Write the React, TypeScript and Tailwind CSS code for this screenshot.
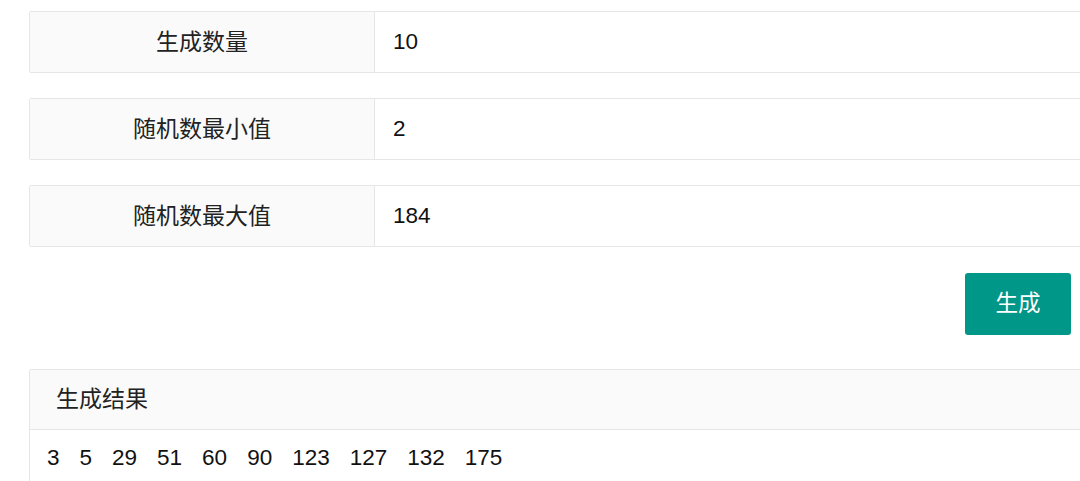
import { FunctionComponent } from "react";

const fields = [
  { label: "生成数量", value: "10" },
  { label: "随机数最小值", value: "2" },
  { label: "随机数最大值", value: "184" },
];

const results = [3, 5, 29, 51, 60, 90, 123, 127, 132, 175];

const font = "font-['Liberation_Sans','Noto_Sans_CJK_SC',sans-serif]";

const App: FunctionComponent = () => {
  return (
    <div className={`w-full overflow-hidden bg-white text-[#333] ${font}`} style={{ height: 481 }}>
      <div className="ml-[29px] w-[1060px] pt-[11px]">
        <div className="flex flex-col gap-[25px]">
          {fields.map((f, i) => (
            <div
              key={i}
              className="flex h-[62px] rounded-[2px] border border-[#e6e6e6]"
            >
              <div className="flex w-[345px] items-center justify-center border-r border-[#e6e6e6] bg-[#fafafa] text-[23px] text-[#222]">
                {f.label}
              </div>
              <div className="flex flex-1 items-center pl-[18px] text-[22.5px] text-[#111]">
                {f.value}
              </div>
            </div>
          ))}
        </div>

        <div className="mt-[26px] flex justify-end pr-[18px]">
          <button className="flex h-[62px] w-[106px] items-center justify-center rounded-[3px] bg-[#009688] text-[22.5px] text-white">
            生成
          </button>
        </div>

        <div className="mt-[34px] rounded-[2px] border border-[#e6e6e6]">
          <div className="flex h-[60px] items-center border-b border-[#e6e6e6] bg-[#fafafa] pl-[26px] text-[23px] text-[#222]">
            生成结果
          </div>
          <div className="flex h-[55px] items-center gap-[20px] pl-[17px] text-[22.5px] text-[#111]">
            {results.map((n, i) => (
              <span key={i}>{n}</span>
            ))}
          </div>
        </div>
      </div>
    </div>
  );
};

export default App;
